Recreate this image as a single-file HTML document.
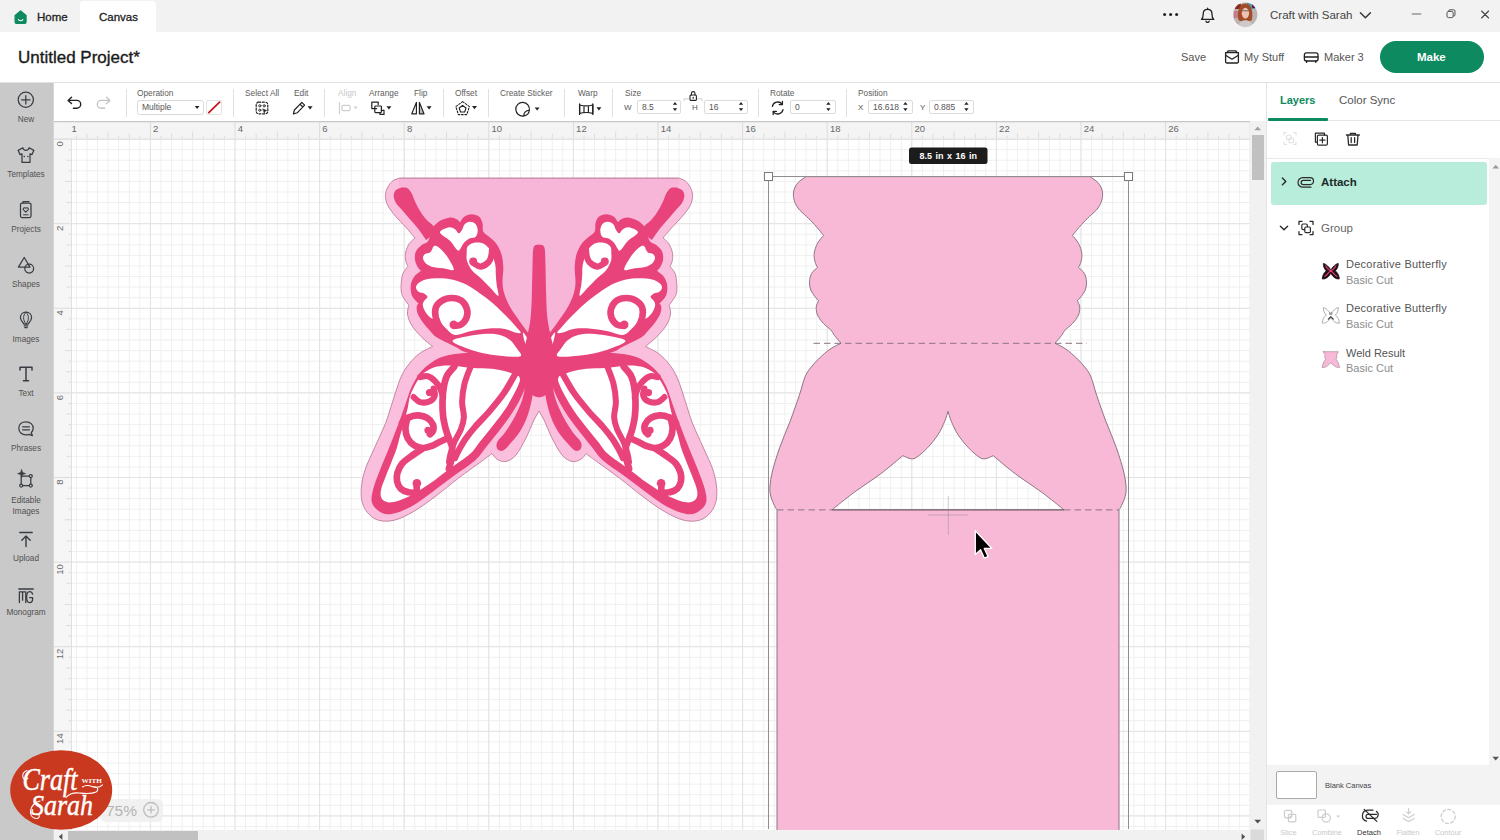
<!DOCTYPE html>
<html lang="en">
<head>
<meta charset="utf-8">
<title>Untitled Project - Canvas</title>
<style>
*{box-sizing:border-box;margin:0;padding:0}
html,body{width:1500px;height:840px;overflow:hidden;background:#fff;font-family:"Liberation Sans",sans-serif;color:#333}
.abs{position:absolute}
#topbar{position:absolute;left:0;top:0;width:1500px;height:32px;background:#f2f2f2}
#tab-canvas{position:absolute;left:80px;top:1px;width:76px;height:31px;background:#fff;border-radius:4px 4px 0 0}
.t{position:absolute;white-space:nowrap;line-height:1}
#titlebar{position:absolute;left:0;top:32px;width:1500px;height:51px;background:#fff;border-bottom:1px solid #e2e2e2}
#sidebar{position:absolute;left:0;top:83px;width:54px;height:757px;background:#c9c9c9}
.sb{position:absolute;left:0;width:52px;text-align:center;font-size:8.2px;color:#505050;line-height:11px}
#toolbar{position:absolute;left:54px;top:83px;width:1212px;height:38px;background:#fff}
.tl{position:absolute;font-size:8.3px;color:#5c5c5c;white-space:nowrap;line-height:1;top:5.5px}
.sep{position:absolute;top:6px;width:1px;height:28px;background:#e0e0e0}
.inp{position:absolute;top:17px;height:14px;border:1px solid #dcdcdc;border-radius:2px;background:#fff;font-size:8.5px;color:#555;line-height:12px;padding-left:4px}
#canvas{position:absolute;left:54px;top:121px;width:1196px;height:708.5px;overflow:hidden;background:#fff}
#vscroll{position:absolute;left:1250px;top:121px;width:16px;height:719px;background:#f1f1f1}
#hscroll{position:absolute;left:54px;top:829.5px;width:1196px;height:10.5px;background:#f1f1f1}
#panel{position:absolute;left:1266px;top:83px;width:234px;height:757px;background:#fff;border-left:1px solid #e4e4e4}
</style>
</head>
<body>
<div id="topbar">
  <div id="tab-canvas"></div>
  <span class="t" style="left:37px;top:11.700px;font-size:11.500px;color:#222;-webkit-text-stroke:.3px #222">Home</span>
  <span class="t" style="left:99px;top:11.700px;font-size:11.500px;color:#222;-webkit-text-stroke:.3px #222">Canvas</span>
  <span class="t" style="left:1270px;top:10px;font-size:11.5px;color:#444">Craft with Sarah</span>
</div>
<div id="titlebar">
  <span class="t" style="left:18px;top:17px;font-size:17px;color:#1a1a1a;-webkit-text-stroke:.35px #1a1a1a">Untitled Project*</span>
  <span class="t" style="left:1181px;top:20px;font-size:11px;color:#555">Save</span>
  <span class="t" style="left:1244px;top:20px;font-size:11px;color:#555">My Stuff</span>
  <span class="t" style="left:1324px;top:20px;font-size:11px;color:#555">Maker 3</span>
  <div class="abs" style="left:1380px;top:9px;width:104px;height:32px;border-radius:16px;background:#0d8a5f"></div>
  <span class="t" style="left:1417px;top:20px;font-size:11.500px;color:#fff;font-weight:bold">Make</span>
</div>
<svg class="abs" style="left:0;top:0" width="1500" height="83" viewBox="0 0 1500 83" fill="none" stroke="#222" stroke-width="1.200" stroke-linecap="round" stroke-linejoin="round">
<!-- home icon -->
<path d="M15.200 15.600l5.400-4.600 5.400 4.600v6.400a1.200 1.200 0 0 1-1.200 1.200h-8.400a1.200 1.200 0 0 1-1.200-1.200z" fill="#0d8a5f" stroke="#0d8a5f" stroke-width="1.400"/><path d="M18.400 19.600c.6.800 1.400 1.100 2.200 1.100s1.600-.3 2.200-1.100" stroke="#fff" stroke-width="1.100"/>
<!-- dots -->
<circle cx="1164.600" cy="14.600" r="1.500" fill="#222" stroke="none"/><circle cx="1170.600" cy="14.600" r="1.500" fill="#222" stroke="none"/><circle cx="1176.600" cy="14.600" r="1.500" fill="#222" stroke="none"/>
<!-- bell -->
<path d="M1201.400 19.400h12.400c-1.400-1.200-1.800-2.800-1.800-5.200 0-2.800-1.800-4.800-4.400-4.800s-4.400 2-4.400 4.800c0 2.400-.4 4-1.800 5.200zM1206 21.200a1.700 1.700 0 0 0 3.200 0" stroke-width="1.300"/><path d="M1207.600 8.200v1"/>
<!-- avatar -->
<defs><clipPath id="avc"><circle cx="1245.200" cy="14.600" r="12.200"/></clipPath></defs>
<g clip-path="url(#avc)" stroke="none">
<rect x="1232" y="1" width="27" height="28" fill="#bdb4b1"/>
<rect x="1247" y="1" width="8" height="8" fill="#5a93a8"/><rect x="1235" y="4" width="6" height="5" fill="#8a2a2a"/><rect x="1234" y="11" width="5" height="7" fill="#c77a8a"/><rect x="1252" y="4" width="4" height="4" fill="#5a2050"/>
<path d="M1238.500 20c-1.800-9 1.200-16.500 6.700-16.500s8.500 7.500 6.700 16.500c-1 1-2.400 1.400-3.600 1h-6.200c-1.200.4-2.600 0-3.600-1z" fill="#a24d2a"/>
<ellipse cx="1245.400" cy="13.200" rx="3.700" ry="5.400" fill="#ecc3b2"/>
<path d="M1242.200 10.800h6.400" stroke="#6a5a58" stroke-width=".9" fill="none"/>
<path d="M1238 29c.4-6 3-8.800 7.400-8.800s7 2.800 7.400 8.800z" fill="#cfc9c9"/>
</g>
<!-- chevron -->
<path d="M1360.400 12.800l5 5 5-5" stroke="#333" stroke-width="1.400"/>
<!-- window controls -->
<path d="M1412.200 14h8.600" stroke="#666" stroke-width="1"/>
<rect x="1447" y="11.400" width="6.200" height="6.200" rx="1.400" stroke="#555" stroke-width="1"/><path d="M1448.800 11.400v-.4a1.200 1.200 0 0 1 1.200-1.200h3.800a1.200 1.200 0 0 1 1.200 1.200v3.800a1.200 1.200 0 0 1-1.200 1.200h-.4" stroke="#555" stroke-width="1"/>
<path d="M1481.600 11l7 7M1488.600 11l-7 7" stroke="#444" stroke-width="1.100"/>
<!-- my stuff icon -->
<path d="M1225.600 52.600h12.800v9.200a1.200 1.200 0 0 1-1.200 1.200h-10.400a1.200 1.200 0 0 1-1.200-1.200z" stroke-width="1.300"/><path d="M1225.600 55.200l6.400 4 6.400-4" stroke-width="1.300"/><path d="M1226.800 52.600l1.600-1.800h7.200l1.600 1.800" stroke-width="1.300"/>
<!-- maker icon -->
<rect x="1304.400" y="52.800" width="13.600" height="8.200" rx="2" stroke-width="1.300"/><path d="M1304.400 57h13.600M1306.600 61v1.400M1315.800 61v1.400" stroke-width="1.300"/>
</svg>
<div id="sidebar">
<div class="abs" style="left:52.5px;top:0;width:1.5px;height:757px;background:#d6d6d6"></div>
<svg class="abs" style="left:0;top:0" width="54" height="757" viewBox="0 83 54 757" fill="none" stroke="#383d42" stroke-width="1.25" stroke-linecap="round" stroke-linejoin="round">
<!-- New -->
<circle cx="25.8" cy="99.8" r="7.6"/><path d="M25.8 95.6v8.4M21.6 99.8h8.4"/>
<!-- Templates (t-shirt) -->
<path d="M22.8 147.8c.6 1.8 2 2.6 3.2 2.6s2.6-.8 3.2-2.6l4.6 2.6-1.8 4.2-2-.8v8.600h-8v-8.600l-2 .8-1.800-4.200z"/>
<path d="M24.200 156.500h.1M27.800 156.500h.1" stroke-width="1.5"/>
<!-- Projects -->
<rect x="20.500" y="203" width="10.500" height="14.500" rx="1.500"/><path d="M23 203v-1.500h6"/><path d="M25.800 212.200l-2.300-2.300a1.400 1.400 0 0 1 2.300-1.600 1.400 1.400 0 0 1 2.300 1.600z" stroke-width="1.100"/><path d="M23.500 214.800h4.600" stroke-width="1"/>
<!-- Shapes -->
<path d="M24.200 257.500l5.800 9.600h-11.600z"/><circle cx="29.200" cy="268.600" r="4.400"/>
<!-- Images (balloon) -->
<path d="M26 312.200c3.600 0 5.600 2.600 5.600 5.400 0 3-2.400 5-3.600 6.400h-4c-1.200-1.400-3.600-3.400-3.600-6.400 0-2.800 2-5.400 5.600-5.400z"/><path d="M26 312.400c-1.800 1.600-2.400 3.400-2.400 5.400s.8 4.200 2.400 6.200c1.600-2 2.400-4.200 2.400-6.200s-.6-3.800-2.400-5.400z" stroke-width="1"/><path d="M24.200 325.800h3.600M24.800 327.600h2.400"/>
<!-- Text -->
<path d="M20 370v-2.800h12v2.800M26 367.200v13.600M23.400 380.800h5.200" stroke-width="1.500"/>
<!-- Phrases -->
<path d="M26 421.800c4.200 0 7.200 2.800 7.200 6.400 0 1.800-.8 3.400-2 4.600l1.200 2.800-3.400-1.200c-1 .4-2 .6-3 .6-4.200 0-7.200-3-7.200-6.800s3-6.400 7.200-6.400z"/><path d="M22.600 426.800h6.800M22.600 429.800h6.800"/>
<!-- Editable images -->
<rect x="21.200" y="476" width="9.600" height="9.600"/><circle cx="21.200" cy="485.600" r="1.500" fill="#c9c9c9"/><circle cx="30.800" cy="485.600" r="1.500" fill="#c9c9c9"/><circle cx="30.800" cy="476" r="1.500" fill="#c9c9c9"/><path d="M21.600 469.600l1 3 3 1-3 1-1 3-1-3-3-1 3-1z" fill="#383d42" stroke-width=".6"/>
<!-- Upload -->
<path d="M19.800 532.600h12.400" stroke-width="1.500"/><path d="M26 546.600v-10.400M21.800 540.200l4.200-4.200 4.200 4.200" stroke-width="1.400"/>
<!-- Monogram -->
<path d="M18.800 589h14.400" stroke-width="1.400"/><path d="M19.400 602.600v-10.800h6.400v10.800M22.600 591.800v8.400" stroke-width="1.300"/><path d="M32.600 594.200c-.4-1.600-1.400-2.600-3-2.600-2 0-3 1.600-3 5.400s1 5.600 3 5.600c1.800 0 3-1.200 3-3.600v-1.400h-3" stroke-width="1.300"/>
</svg>
<div class="sb" style="top:31px">New</div>
<div class="sb" style="top:86px">Templates</div>
<div class="sb" style="top:141px">Projects</div>
<div class="sb" style="top:196px">Shapes</div>
<div class="sb" style="top:251px">Images</div>
<div class="sb" style="top:305px">Text</div>
<div class="sb" style="top:360px">Phrases</div>
<div class="sb" style="top:412px">Editable<br>Images</div>
<div class="sb" style="top:470px">Upload</div>
<div class="sb" style="top:524px">Monogram</div>
</div>
<div id="toolbar">
<svg class="abs" style="left:0;top:0;z-index:2" width="1212" height="38" viewBox="54 83 1212 38" fill="none" stroke="#222" stroke-width="1.200" stroke-linecap="round" stroke-linejoin="round">
<!-- undo / redo -->
<path d="M71.500 97.200l-3.400 3.200 3.400 3.200M68.400 100.400h8.400a3.900 3.900 0 0 1 0 7.800h-3.400" stroke-width="1.400"/>
<path d="M106.500 97.200l3.400 3.200-3.400 3.200M109.600 100.400h-8.400a3.900 3.900 0 0 0 0 7.800h3.400" stroke="#c4c4c4" stroke-width="1.400"/>
<!-- operation select -->
<rect x="137.500" y="100.500" width="66" height="14" rx="2" stroke="#d9d9d9" stroke-width="1"/>
<path d="M194.800 106l2.300 3 2.300-3z" fill="#222" stroke="none"/>
<rect x="206.500" y="100.500" width="15" height="14" rx="1.500" stroke="#e2e2e2" stroke-width="1"/>
<path d="M208.800 112.600l10.800-10.400" stroke="#c9151e" stroke-width="1.800"/>
<!-- select all -->
<rect x="256.200" y="102.200" width="11.600" height="11.600" rx="2.500" stroke-dasharray="2 1.600" stroke-width="1.200"/>
<circle cx="259.800" cy="105.800" r="1.100" stroke-width=".9"/><circle cx="264.200" cy="105.800" r="1.100" stroke-width=".9"/><circle cx="259.800" cy="110.200" r="1.100" stroke-width=".9"/><path d="M263 109l3.600 1.600-1.600.6-.6 1.600z" fill="#222" stroke-width=".6"/>
<!-- edit pencil -->
<path d="M293.400 114l1-4 7.400-7.600 2.800 2.800-7.400 7.600zM300 104.200l2.800 2.800" stroke-width="1.200"/><path d="M307.6 106.2l2.5 3.2 2.5-3.2z" fill="#222" stroke="none"/>
<!-- align (disabled) -->
<path d="M339.500 102.600v11" stroke="#cfcfcf"/><rect x="342" y="105.400" width="8" height="5.200" rx="1" stroke="#cfcfcf"/><path d="M353.600 106.600l2 2.600 2-2.600z" fill="#cfcfcf" stroke="none"/>
<!-- arrange -->
<path d="M376.600 108.600h-4.800v-6.400h6.400v2.400" stroke-width="1.200"/><rect x="374.800" y="106" width="6.600" height="6.600" rx=".8" stroke-width="1.200"/><path d="M380 112.600v1.800h4v-4h-2.600" stroke-width="1.200"/><path d="M386.4 106.2l2.5 3.2 2.5-3.2z" fill="#222" stroke="none"/>
<!-- flip -->
<path d="M416.400 102.400v11.400h-4.600z" stroke-width="1.200"/><path d="M419.400 102.400v11.400h4.600z" stroke-width="1.200" fill="#bdbdbd"/><path d="M426.6 106.2l2.5 3.2 2.5-3.2z" fill="#222" stroke="none"/>
<!-- offset -->
<path d="M462.600 105.400l3.400 2.600-1.300 4h-4.200l-1.300-4z" stroke-width="1.100"/><path d="M462.600 101.600l6.800 5-2.600 8h-8.400l-2.600-8z" stroke-width="1.100" stroke-dasharray="1.800 1.600"/><path d="M472.0 106.0l2.5 3.2 2.5-3.2z" fill="#222" stroke="none"/>
<!-- create sticker -->
<path d="M529.300 110.300A6.800 6.800 0 1 0 523.700 115.900" stroke-width="1.250"/><path d="M523.700 115.900C523.900 112.800 526.200 110.500 529.300 110.300C529.100 113.400 526.800 115.600 523.700 115.900z" stroke-width="1.150"/><path d="M534.6 107.4l2.5 3.2 2.5-3.2z" fill="#222" stroke="none"/>
<!-- warp -->
<path d="M579.600 105c4.400 1.200 8.800 1.200 13.200 0v8.400c-4.400-1.200-8.800-1.200-13.200 0zM584 105.800v6.800M588.400 105.800v6.800" stroke-width="1.200"/><path d="M579.600 104v10.400M592.800 104v10.400" stroke-width="1.300"/><path d="M596.4 107.2l2.5 3.2 2.5-3.2z" fill="#222" stroke="none"/>
<!-- lock -->
<path d="M684 100.600v-1.800h5M702 100.600v-1.800h-5" stroke="#cfcfcf" stroke-width="1"/>
<rect x="690" y="95" width="6.400" height="5.400" rx="1" stroke-width="1.100"/><path d="M691.400 95v-1.600a1.800 1.800 0 0 1 3.600 0v1.600" stroke-width="1.100"/><path d="M693.200 97.200v1" stroke-width="1.100"/>
<!-- rotate icon -->
<path d="M772.400 106.400a5.400 5.400 0 0 1 9.600-2.200M783 109.600a5.400 5.400 0 0 1-9.600 2.200" stroke-width="1.300"/><path d="M782.400 101.400v3.200h-3.200M773.200 114.600v-3.200h3.200" stroke-width="1.300"/>
<path d="M672.8 104.800l2.200-2.800 2.200 2.800zM672.8 108.200l2.200 2.800 2.200-2.800z" fill="#222" stroke="none"/><path d="M738.8 104.800l2.200-2.800 2.200 2.800zM738.8 108.200l2.200 2.800 2.200-2.800z" fill="#222" stroke="none"/><path d="M826.2 104.800l2.200-2.800 2.200 2.800zM826.2 108.200l2.200 2.800 2.200-2.800z" fill="#222" stroke="none"/><path d="M903.2 104.800l2.200-2.800 2.200 2.800zM903.2 108.200l2.200 2.800 2.200-2.800z" fill="#222" stroke="none"/><path d="M964.2 104.800l2.200-2.800 2.200 2.800zM964.2 108.200l2.200 2.800 2.200-2.800z" fill="#222" stroke="none"/>
</svg>
<div class="sep" style="left:72px"></div><div class="sep" style="left:179px"></div><div class="sep" style="left:270px"></div><div class="sep" style="left:389px"></div><div class="sep" style="left:434px"></div><div class="sep" style="left:510px"></div><div class="sep" style="left:558px"></div><div class="sep" style="left:704px"></div><div class="sep" style="left:792px"></div>
<span class="tl" style="left:83px">Operation</span>
<span class="t" style="left:88px;top:20px;font-size:8.500px;color:#555">Multiple</span>
<span class="tl" style="left:191px">Select All</span>
<span class="tl" style="left:240px">Edit</span>
<span class="tl" style="left:284px;color:#c8c8c8">Align</span>
<span class="tl" style="left:315px">Arrange</span>
<span class="tl" style="left:360px">Flip</span>
<span class="tl" style="left:401px">Offset</span>
<span class="tl" style="left:446px">Create Sticker</span>
<span class="tl" style="left:524px">Warp</span>
<span class="tl" style="left:571px">Size</span>
<span class="t" style="left:570px;top:20.500px;font-size:8px;color:#555">W</span>
<div class="inp" style="left:583px;width:44px">8.5</div>
<span class="t" style="left:638px;top:20.500px;font-size:8px;color:#555">H</span>
<div class="inp" style="left:650px;width:44px">16</div>
<span class="tl" style="left:716px">Rotate</span>
<div class="inp" style="left:736px;width:46px">0</div>
<span class="tl" style="left:804px">Position</span>
<span class="t" style="left:804px;top:20.500px;font-size:8px;color:#555">X</span>
<div class="inp" style="left:814px;width:45px">16.618</div>
<span class="t" style="left:866px;top:20.500px;font-size:8px;color:#555">Y</span>
<div class="inp" style="left:875px;width:45px">0.885</div>
</div>
<div id="canvas">
<svg id="cv" width="1196" height="709" viewBox="54 121 1196 709" style="position:absolute;left:0;top:0;font-family:'Liberation Sans',sans-serif">
<defs>
<pattern id="gmin" x="65.3" y="138.6" width="10.5750" height="10.5750" patternUnits="userSpaceOnUse"><path d="M0.5 0V10.5750M0 0.5H10.5750" stroke="#efefef" stroke-width="1" fill="none"/></pattern>
<pattern id="gmaj" x="65.3" y="138.6" width="84.6000" height="84.6000" patternUnits="userSpaceOnUse"><path d="M0.5 0V84.6000M0 0.5H84.6000" stroke="#e3e3e3" stroke-width="1" fill="none"/></pattern>
</defs>
<rect x="54" y="121" width="1196" height="709" fill="#fff"/>
<rect x="54" y="121" width="1196" height="709" fill="url(#gmin)"/>
<rect x="54" y="121" width="1196" height="709" fill="url(#gmaj)"/>
<g id="card">
<path d="M948.0 176.6L806.0 176.6C804.7 177.6 800.2 180.3 798.2 182.5C796.2 184.7 794.7 187.3 794.0 190.0C793.3 192.7 793.1 195.6 793.8 198.6C794.4 201.6 795.8 204.9 797.9 207.9C800.0 210.9 803.7 213.7 806.4 216.4C809.1 219.1 811.4 221.1 814.3 224.3C817.2 227.5 822.0 233.6 823.6 235.5C822.6 236.8 819.1 240.3 817.5 243.3C815.9 246.3 814.6 250.2 814.2 253.3C813.8 256.4 814.5 259.3 815.0 261.7C815.5 264.1 817.1 266.5 817.5 267.5C816.5 268.5 813.0 270.9 811.7 273.3C810.4 275.7 809.6 278.9 809.5 281.7C809.4 284.5 809.9 287.5 810.8 290.0C811.7 292.5 813.7 294.9 815.0 296.7C816.3 298.5 818.1 300.1 818.7 300.8C818.3 301.8 816.5 304.3 816.3 306.7C816.1 309.1 816.3 312.2 817.5 315.0C818.7 317.8 821.1 320.8 823.3 323.3C825.5 325.8 828.9 328.0 830.8 330.0C832.7 332.0 832.8 333.3 834.5 335.5C836.2 337.7 839.9 341.9 841.0 343.2C839.2 344.2 833.6 346.7 830.0 349.2C826.4 351.7 822.5 355.2 819.2 358.3C816.0 361.4 812.9 364.9 810.5 368.0C808.1 371.1 806.9 372.4 805.0 377.0C803.1 381.6 801.8 388.0 799.3 395.4C796.8 402.8 793.3 412.9 790.0 421.6C786.7 430.3 782.6 439.1 779.6 447.8C776.6 456.5 773.4 466.6 771.8 474.0C770.2 481.4 769.6 487.1 770.0 492.3C770.4 497.5 773.2 502.5 774.4 505.4C775.6 508.3 776.6 509.1 777.0 509.8L777.0 832.0L948.0 832.0L1119.0 832.0L1119.0 509.8C1119.4 509.1 1120.4 508.3 1121.6 505.4C1122.8 502.5 1125.6 497.5 1126.0 492.3C1126.4 487.1 1125.8 481.4 1124.2 474.0C1122.6 466.6 1119.4 456.5 1116.4 447.8C1113.4 439.1 1109.3 430.3 1106.0 421.6C1102.7 412.9 1099.2 402.8 1096.7 395.4C1094.2 388.0 1092.9 381.6 1091.0 377.0C1089.1 372.4 1087.9 371.1 1085.5 368.0C1083.1 364.9 1080.0 361.4 1076.8 358.3C1073.5 355.2 1069.6 351.7 1066.0 349.2C1062.4 346.7 1056.8 344.2 1055.0 343.2C1056.1 341.9 1059.8 337.7 1061.5 335.5C1063.2 333.3 1063.3 332.0 1065.2 330.0C1067.1 328.0 1070.5 325.8 1072.7 323.3C1074.9 320.8 1077.3 317.8 1078.5 315.0C1079.7 312.2 1079.9 309.1 1079.7 306.7C1079.5 304.3 1077.7 301.8 1077.3 300.8C1077.9 300.1 1079.7 298.5 1081.0 296.7C1082.3 294.9 1084.3 292.5 1085.2 290.0C1086.1 287.5 1086.7 284.5 1086.5 281.7C1086.3 278.9 1085.6 275.7 1084.3 273.3C1083.0 270.9 1079.5 268.5 1078.5 267.5C1078.9 266.5 1080.5 264.1 1081.0 261.7C1081.5 259.3 1082.2 256.4 1081.8 253.3C1081.4 250.2 1080.1 246.3 1078.5 243.3C1076.9 240.3 1073.4 236.8 1072.4 235.5C1074.0 233.6 1078.8 227.5 1081.7 224.3C1084.6 221.1 1086.9 219.1 1089.6 216.4C1092.3 213.7 1096.0 210.9 1098.1 207.9C1100.2 204.9 1101.5 201.6 1102.2 198.6C1102.9 195.6 1102.7 192.7 1102.0 190.0C1101.3 187.3 1099.8 184.7 1097.8 182.5C1095.8 180.3 1091.3 177.6 1090.0 176.6L948.0 176.6ZM948.0 411.2C947.4 412.9 946.3 417.7 944.6 421.6C942.9 425.5 940.9 430.3 938.0 434.7C935.1 439.1 931.0 444.1 927.5 447.8C924.0 451.5 919.7 455.2 917.0 457.0C914.3 458.8 913.7 459.0 911.3 458.8C908.9 458.6 904.1 456.2 902.7 455.7C899.0 458.8 888.5 467.9 880.4 474.0C872.3 480.1 862.3 486.3 854.2 492.3C846.1 498.3 835.7 506.9 832.0 509.8L948.0 509.8L1064.0 509.8C1060.3 506.9 1049.9 498.3 1041.8 492.3C1033.7 486.3 1023.7 480.1 1015.6 474.0C1007.5 467.9 997.0 458.8 993.3 455.7C991.9 456.2 987.1 458.6 984.7 458.8C982.3 459.0 981.7 458.8 979.0 457.0C976.3 455.2 972.0 451.5 968.5 447.8C965.0 444.1 960.9 439.1 958.0 434.7C955.1 430.3 953.1 425.5 951.4 421.6C949.7 417.7 948.6 412.9 948.0 411.2Z" fill="#f8b9d7" fill-rule="evenodd" stroke="#8d7583" stroke-width="1"/>
<path d="M813.5 343.3H1087" stroke="#8c7482" stroke-width="1" stroke-dasharray="6.5 4" fill="none"/>
<path d="M777 509.9H832M1064 509.9H1119" stroke="#8c7482" stroke-width="1" stroke-dasharray="6.5 4" fill="none"/>
<path d="M832 509.9H1064" stroke="#77606c" stroke-width="1" fill="none"/>
</g>
<!--BF0--><g id="bfly">
<path d="M539.0 178.1L399.0 178.1C397.9 178.7 394.1 179.7 392.1 181.4C390.1 183.2 388.2 186.1 387.1 188.6C386.0 191.1 385.3 193.6 385.4 196.4C385.5 199.2 386.2 202.4 387.9 205.7C389.6 209.0 392.7 212.8 395.7 216.4C398.7 220.0 402.5 223.5 405.7 227.1C408.9 230.7 413.4 236.1 415.0 237.9C414.1 238.8 410.9 241.2 409.3 243.6C407.8 246.0 406.3 249.2 405.7 252.1C405.1 254.9 405.3 258.3 405.7 260.7C406.1 263.1 407.5 265.4 407.9 266.4C407.1 267.6 404.0 270.7 402.9 273.6C401.8 276.5 401.4 280.3 401.2 283.6C401.0 286.9 400.9 290.8 401.6 293.6C402.3 296.4 404.3 298.6 405.5 300.5C406.7 302.4 408.2 304.4 408.8 305.2C408.6 306.7 407.1 310.7 407.5 314.0C407.9 317.3 409.2 321.2 411.5 325.0C413.8 328.8 417.5 332.9 421.0 336.5C424.5 340.1 430.6 344.8 432.5 346.5C430.3 347.7 423.4 350.6 419.5 353.5C415.6 356.4 412.0 360.2 409.0 364.0C406.0 367.8 403.7 371.5 401.5 376.0C399.3 380.5 397.8 385.9 396.0 391.0C394.2 396.1 392.8 401.3 391.0 406.7C389.2 412.1 388.2 416.4 385.5 423.3C382.8 430.2 377.9 440.2 374.5 448.0C371.1 455.8 367.2 463.3 365.0 470.0C362.8 476.7 361.7 482.8 361.3 488.3C360.9 493.9 361.2 498.9 362.5 503.3C363.8 507.7 366.3 511.6 369.2 514.5C372.1 517.4 375.7 519.7 380.0 520.6C384.3 521.5 389.4 521.5 395.0 520.0C400.6 518.5 406.6 515.6 413.3 511.7C420.0 507.8 427.5 502.3 435.0 496.7C442.5 491.1 450.5 484.2 458.3 478.3C466.1 472.4 476.1 465.3 481.7 461.2C487.3 457.1 490.3 454.9 492.0 453.6C492.9 454.6 495.1 458.2 497.4 459.5C499.7 460.8 502.9 462.2 506.0 461.5C509.1 460.8 512.7 458.9 516.0 455.0C519.3 451.1 523.0 443.8 526.0 438.0C529.0 432.2 531.8 424.5 534.0 420.0C536.2 415.5 538.2 412.5 539.0 411.0C539.8 412.5 541.8 415.5 544.0 420.0C546.2 424.5 549.0 432.2 552.0 438.0C555.0 443.8 558.7 451.1 562.0 455.0C565.3 458.9 568.9 460.8 572.0 461.5C575.1 462.2 578.3 460.8 580.6 459.5C582.9 458.2 585.1 454.6 586.0 453.6C587.7 454.9 590.7 457.1 596.3 461.2C601.9 465.3 611.9 472.4 619.7 478.3C627.5 484.2 635.5 491.1 643.0 496.7C650.5 502.3 658.0 507.8 664.7 511.7C671.4 515.6 677.5 518.5 683.0 520.0C688.5 521.5 693.7 521.5 698.0 520.6C702.3 519.7 705.9 517.4 708.8 514.5C711.7 511.6 714.2 507.7 715.5 503.3C716.8 498.9 717.1 493.9 716.7 488.3C716.3 482.8 715.2 476.7 713.0 470.0C710.8 463.3 706.9 455.8 703.5 448.0C700.1 440.2 695.2 430.2 692.5 423.3C689.8 416.4 688.8 412.1 687.0 406.7C685.2 401.3 683.8 396.1 682.0 391.0C680.2 385.9 678.7 380.5 676.5 376.0C674.3 371.5 672.0 367.8 669.0 364.0C666.0 360.2 662.4 356.4 658.5 353.5C654.6 350.6 647.7 347.7 645.5 346.5C647.4 344.8 653.5 340.1 657.0 336.5C660.5 332.9 664.2 328.8 666.5 325.0C668.8 321.2 670.0 317.3 670.5 314.0C671.0 310.7 669.4 306.7 669.2 305.2C669.8 304.4 671.3 302.4 672.5 300.5C673.7 298.6 675.7 296.4 676.4 293.6C677.1 290.8 677.0 286.9 676.8 283.6C676.6 280.3 676.2 276.5 675.1 273.6C674.0 270.7 670.9 267.6 670.1 266.4C670.5 265.4 671.9 263.1 672.3 260.7C672.7 258.3 672.9 254.9 672.3 252.1C671.7 249.2 670.2 246.0 668.7 243.6C667.2 241.2 664.0 238.8 663.0 237.9C664.5 236.1 669.1 230.7 672.3 227.1C675.5 223.5 679.3 220.0 682.3 216.4C685.3 212.8 688.4 209.0 690.1 205.7C691.8 202.4 692.5 199.2 692.6 196.4C692.7 193.6 692.0 191.1 690.9 188.6C689.8 186.1 687.9 183.2 685.9 181.4C683.9 179.7 680.1 178.7 679.0 178.1L539.0 178.1Z" fill="#f9bfdd" stroke="#b5728f" stroke-width=".8"/>
<path d="M539.0 178.1L399.5 178.1C399.8 180.1 396.1 181.7 401.5 190.0C406.9 198.3 420.6 218.0 432.0 228.0C443.4 238.0 458.7 238.0 470.0 250.0C481.3 262.0 488.5 284.2 500.0 300.0C511.5 315.8 532.5 337.5 539.0 345.0C545.5 337.5 566.5 315.8 578.0 300.0C589.5 284.2 596.7 262.0 608.0 250.0C619.3 238.0 634.6 238.0 646.0 228.0C657.4 218.0 671.1 198.3 676.5 190.0C681.9 181.7 678.2 180.1 678.5 178.1L539.0 178.1Z" fill="#f7b6d8"/>
<path d="M399.500 178.300H678.500" stroke="#c58aa8" stroke-width="1" fill="none"/>
<g><path d="M433.3 226.7C434.4 225.7 437.2 222.3 440.0 220.8C442.8 219.3 447.2 217.8 450.0 217.5C452.8 217.2 455.0 218.4 456.7 219.2C458.4 220.0 459.4 221.7 460.0 222.2C460.7 221.3 462.2 218.0 464.2 216.7C466.1 215.4 469.2 214.2 471.7 214.2C474.2 214.2 477.4 215.2 479.2 216.7C481.0 218.2 481.8 220.8 482.5 223.3C483.2 225.8 482.1 229.3 483.3 231.7C484.6 234.1 487.8 235.4 490.0 237.5C492.2 239.6 494.8 241.3 496.7 244.2C498.6 247.1 500.6 251.0 501.7 255.0C502.8 259.0 503.2 263.9 503.3 268.3C503.4 272.8 502.4 277.5 502.5 281.7C502.6 285.9 502.9 289.1 504.2 293.3C505.4 297.5 507.4 302.0 510.0 306.7C512.6 311.4 516.7 317.0 520.0 321.7C523.3 326.4 526.8 331.1 530.0 335.0C533.2 338.9 537.5 343.3 539.0 345.0L539.0 362.0C532.5 361.7 512.0 361.6 500.0 360.0C487.9 358.4 473.9 354.6 466.7 352.5C459.5 350.4 460.0 349.2 456.7 347.5C453.4 345.8 450.2 344.3 446.7 342.5C443.2 340.7 438.7 338.8 435.8 336.7C432.9 334.6 431.6 332.6 429.2 330.0C426.8 327.4 423.6 323.6 421.7 320.8C419.8 318.0 418.3 315.7 417.5 313.3C416.7 310.9 416.5 308.4 416.7 306.7C416.9 305.0 418.3 303.9 418.6 303.3C418.1 302.9 417.0 302.2 415.8 300.8C414.6 299.4 412.5 297.6 411.7 295.0C410.9 292.4 410.4 288.1 410.8 285.0C411.2 281.9 412.5 279.1 414.2 276.7C415.9 274.3 419.9 271.8 421.0 270.8C420.4 270.1 418.5 268.5 417.5 266.7C416.5 264.9 415.3 262.5 415.0 260.0C414.7 257.5 414.7 254.2 415.8 251.7C416.9 249.2 419.6 246.8 421.7 245.0C423.8 243.2 426.4 243.9 428.3 240.8C430.2 237.8 432.5 229.0 433.3 226.7Z" fill="#e9437c"/><path d="M539.0 345.0C532.5 346.2 512.2 350.7 500.0 352.0C487.8 353.3 474.8 352.4 466.0 353.0C457.2 353.6 452.2 354.2 447.0 355.5C441.8 356.8 438.8 357.9 434.5 360.5C430.2 363.1 425.2 366.8 421.5 371.0C417.8 375.2 414.7 380.5 412.0 386.0C409.3 391.5 407.8 397.5 405.5 404.0C403.2 410.5 400.8 417.7 398.0 425.0C395.2 432.3 392.0 440.5 389.0 448.0C386.0 455.5 382.6 463.3 380.0 470.0C377.4 476.7 374.9 482.7 373.5 488.0C372.1 493.3 371.0 498.0 371.7 501.7C372.4 505.4 375.0 507.9 377.5 510.0C380.0 512.1 382.9 513.9 386.7 514.2C390.4 514.5 395.0 513.5 400.0 511.7C405.0 509.9 410.9 506.9 416.7 503.3C422.5 499.7 428.6 494.7 435.0 490.0C441.4 485.3 448.3 479.9 455.0 475.0C461.7 470.1 469.7 465.3 475.0 460.5C480.3 455.7 483.1 450.8 487.0 446.0C490.9 441.2 494.9 436.3 498.6 431.5C502.4 426.7 506.1 422.0 509.5 417.0C512.9 412.0 516.2 406.8 519.0 401.5C521.8 396.2 524.2 389.6 526.5 385.0C528.8 380.4 530.9 376.5 533.0 374.0C535.1 371.5 538.0 370.7 539.0 370.0Z" fill="#e9437c"/><path d="M401.4 187.4C400.5 187.8 397.3 188.7 396.0 190.0C394.7 191.3 393.6 193.3 393.6 195.5C393.6 197.7 394.7 200.7 396.0 203.0C397.3 205.3 399.1 206.6 401.4 209.3C403.7 212.0 407.1 216.0 410.0 219.3C412.9 222.6 415.9 225.9 418.6 229.3C421.3 232.8 424.8 238.2 426.0 240.0L438.0 232.0C437.2 230.9 434.9 227.6 433.0 225.5C431.1 223.4 428.6 222.2 426.3 219.6C424.0 217.0 421.2 213.0 419.3 209.8C417.4 206.6 415.9 203.3 414.6 200.5C413.3 197.7 412.8 195.1 411.5 193.0C410.2 190.9 408.7 188.9 407.0 188.0C405.3 187.1 402.3 187.5 401.4 187.4Z" fill="#e9437c"/><path d="M530.0 378.0C529.3 379.0 527.3 380.2 526.0 383.8C524.7 387.4 524.2 393.9 522.4 399.3C520.6 404.7 518.0 410.6 515.2 416.0C512.4 421.4 508.6 427.2 505.7 431.4C502.8 435.6 499.3 438.4 497.8 441.0C496.3 443.6 496.3 445.3 496.6 446.9C496.9 448.5 498.3 450.1 499.5 450.6C500.7 451.1 502.2 451.2 504.0 450.0C505.8 448.8 507.8 446.4 510.5 443.3C513.2 440.2 517.2 435.8 520.0 431.4C522.8 427.0 525.1 422.5 527.1 417.1C529.1 411.8 530.8 404.8 531.9 399.3C533.0 393.8 533.6 387.6 534.0 384.0C534.4 380.4 534.0 379.0 534.0 378.0Z" fill="#e9437c"/><path d="M435.8 245.8C437.2 246.4 439.6 247.9 441.7 250.0C443.8 252.1 446.3 255.1 448.3 258.3C450.3 261.6 454.5 268.0 453.7 269.7C452.8 271.3 447.0 268.8 443.3 268.3C439.7 267.8 434.7 267.6 431.7 266.7C428.6 265.7 426.4 264.0 425.0 262.5C423.6 261.0 422.9 258.9 423.0 257.5C423.1 256.1 424.2 254.6 425.3 253.8C426.4 253.0 428.6 253.4 429.7 252.7C430.8 252.0 431.4 250.7 432.0 249.7C432.6 248.7 432.7 247.3 433.3 246.7C434.0 246.0 434.4 245.3 435.8 245.8ZM440.0 232.5C439.7 230.3 445.8 228.1 448.3 227.5C450.8 226.9 453.3 228.2 455.0 229.2C456.7 230.1 457.5 233.2 458.7 233.3C459.8 233.5 461.0 231.5 462.0 230.0C463.0 228.5 463.3 225.6 464.7 224.2C466.0 222.8 468.2 221.8 470.0 221.7C471.8 221.6 474.1 222.3 475.3 223.7C476.6 225.1 477.6 227.8 477.7 230.0C477.8 232.2 477.1 235.3 475.8 236.7C474.6 238.1 471.9 237.4 470.0 238.3C468.1 239.3 465.8 240.8 464.2 242.5C462.6 244.2 461.4 247.4 460.3 248.7C459.2 250.0 459.2 251.6 457.5 250.3C455.8 249.0 452.9 243.8 450.0 240.8C447.1 237.9 440.3 234.7 440.0 232.5ZM467.5 246.7C468.6 244.9 471.0 243.6 473.3 243.0C475.7 242.4 479.3 242.4 481.7 243.0C484.0 243.6 485.8 244.9 487.5 246.7C489.2 248.4 490.4 250.3 491.7 253.3C493.0 256.4 494.6 261.4 495.3 265.0C496.0 268.6 495.6 271.7 495.8 275.0C496.1 278.3 496.2 281.5 496.7 285.0C497.1 288.5 499.4 295.4 498.3 295.8C497.2 296.2 493.1 290.6 490.0 287.5C486.9 284.4 483.1 280.4 480.0 277.5C476.9 274.6 473.8 272.8 471.7 270.0C469.5 267.2 467.8 263.6 467.0 260.8C466.2 258.1 466.6 255.7 466.7 253.3C466.8 251.0 466.4 248.4 467.5 246.7ZM418.3 283.3C420.1 281.9 422.8 280.0 426.7 279.2C430.6 278.3 436.7 278.1 441.7 278.3C446.7 278.6 451.9 279.4 456.7 280.8C461.4 282.2 465.6 284.2 470.0 286.7C474.4 289.2 478.9 292.5 483.3 295.8C487.8 299.2 492.5 302.9 496.7 306.7C500.8 310.4 505.0 314.9 508.3 318.3C511.7 321.8 514.6 325.1 516.7 327.5C518.8 329.9 521.1 332.0 520.8 332.8C520.6 333.7 517.9 333.2 515.0 332.5C512.1 331.8 508.1 329.3 503.3 328.7C498.6 328.0 492.2 328.2 486.7 328.7C481.1 329.1 475.3 330.3 470.0 331.3C464.7 332.4 459.2 335.6 455.0 335.0C450.8 334.4 447.8 329.9 445.0 327.5C442.2 325.1 440.7 322.4 438.3 320.8C436.0 319.2 433.1 319.5 431.0 318.0C428.9 316.5 426.9 314.2 425.5 312.0C424.1 309.8 423.0 306.9 422.8 305.0C422.6 303.1 423.7 301.8 424.5 300.5C425.3 299.2 427.6 298.2 427.5 297.0C427.4 295.8 425.4 294.3 424.0 293.5C422.6 292.7 420.3 292.9 419.0 292.0C417.7 291.1 416.1 289.4 416.0 288.0C415.9 286.6 416.6 284.8 418.3 283.3ZM452.5 340.8C453.1 338.8 464.3 337.0 470.0 335.8C475.7 334.6 481.7 333.8 486.7 333.7C491.7 333.5 496.1 333.9 500.0 335.0C503.9 336.1 507.2 337.8 510.0 340.0C512.8 342.2 514.9 345.6 516.7 348.3C518.4 351.1 523.1 355.1 520.3 356.3C517.6 357.6 506.2 356.3 500.0 355.8C493.8 355.3 488.9 354.6 483.3 353.3C477.8 352.1 471.8 350.4 466.7 348.3C461.5 346.2 451.9 342.9 452.5 340.8ZM523.0 332.5C523.6 332.2 527.2 337.5 528.0 340.0C528.8 342.5 528.1 347.2 527.5 347.5C526.9 347.8 525.4 344.2 524.7 341.7C523.9 339.2 522.4 332.8 523.0 332.5ZM516.4 375.8C514.7 375.1 512.9 373.5 508.8 372.3C504.7 371.1 497.7 369.5 491.7 368.8C485.7 368.1 479.3 368.6 472.6 368.0C465.9 367.4 457.3 365.8 451.4 365.5C445.5 365.2 441.1 365.7 437.1 366.5C433.1 367.3 430.4 368.8 427.6 370.5C424.8 372.2 422.8 373.8 420.5 376.5C418.2 379.2 415.8 383.6 414.0 387.0C412.2 390.4 410.8 393.8 409.8 397.1C408.8 400.4 408.7 403.5 408.0 406.7C407.3 409.9 406.4 413.1 405.6 416.2C404.8 419.2 404.3 421.7 403.4 425.0C402.5 428.3 401.1 432.0 400.0 436.0C398.9 440.0 397.9 444.7 396.5 449.0C395.1 453.3 393.3 457.3 391.5 462.0C389.7 466.7 387.3 472.2 385.5 477.0C383.7 481.8 381.3 487.2 380.8 491.0C380.3 494.8 380.7 497.6 382.5 499.5C384.3 501.4 387.4 502.8 391.7 502.3C396.0 501.8 401.9 499.8 408.3 496.7C414.7 493.6 423.1 488.3 430.0 483.6C436.9 478.9 443.2 473.6 450.0 468.6C456.8 463.6 465.6 457.9 470.5 453.5C475.4 449.1 476.1 446.6 479.5 442.3C482.9 438.1 487.1 432.9 491.0 428.0C494.9 423.1 499.3 417.8 502.9 412.6C506.5 407.5 509.6 402.2 512.4 397.1C515.2 392.0 518.4 385.4 519.5 382.0C520.6 378.6 519.5 377.5 519.0 376.5C518.5 375.5 518.1 376.5 516.4 375.8Z" fill="#fff"/><path d="M492.0 250.0C491.9 251.0 491.9 254.0 491.3 256.0C490.8 258.0 490.5 260.2 488.7 262.0C486.9 263.8 483.1 266.4 480.7 266.6C478.2 266.9 475.1 264.0 474.0 263.5" fill="none" stroke="#e9437c" stroke-width="6.2" stroke-linecap="round" stroke-linejoin="round"/><circle cx="473.2" cy="261.6" r="4" fill="#e9437c"/><path d="M450.0 338.0C448.5 336.4 443.2 331.8 440.8 328.3C438.5 324.9 436.7 321.0 435.8 317.5C435.0 314.0 434.9 310.3 435.8 307.5C436.8 304.7 439.0 302.4 441.7 300.8C444.3 299.2 448.3 298.0 451.7 298.0C455.0 298.0 459.1 299.0 461.7 300.8C464.2 302.7 466.2 306.2 467.0 309.2C467.8 312.1 467.4 315.8 466.3 318.3C465.3 320.9 462.8 323.4 460.8 324.7C458.9 325.9 455.7 325.6 454.7 325.8" fill="none" stroke="#e9437c" stroke-width="6.6" stroke-linecap="round" stroke-linejoin="round"/><circle cx="453.7" cy="324.7" r="4.2" fill="#e9437c"/><path d="M454.3 366.7C453.1 368.2 448.9 372.1 447.1 375.6C445.3 379.1 444.4 383.2 443.7 387.6C442.9 392.0 442.6 397.1 442.5 401.9C442.4 406.7 442.6 411.7 443.1 416.2C443.6 420.6 444.7 425.0 445.6 428.6C446.5 432.1 447.5 434.4 448.6 437.5C449.7 440.6 451.6 443.9 452.1 447.1C452.7 450.4 452.7 453.6 452.1 457.1C451.6 460.7 449.4 466.7 448.9 468.6" fill="none" stroke="#e9437c" stroke-width="6.7" stroke-linecap="round" stroke-linejoin="round"/><path d="M443.1 397.1C442.6 395.7 441.6 391.3 440.2 388.6C438.9 385.9 437.0 383.0 434.9 381.0C432.8 378.9 430.3 376.8 427.9 376.2C425.4 375.6 421.5 377.0 420.2 377.1" fill="none" stroke="#e9437c" stroke-width="6.1000000000000005" stroke-linecap="round" stroke-linejoin="round"/><path d="M473.0 363.5C472.6 364.1 471.9 363.7 470.5 367.1C469.1 370.5 465.9 378.0 464.5 383.8C463.1 389.6 462.2 396.1 462.1 401.7C462.0 407.2 464.1 412.6 463.9 417.1C463.7 421.7 462.7 424.6 461.0 429.0C459.3 433.4 455.6 438.9 453.8 443.3C452.0 447.7 451.0 452.1 450.2 455.2C449.4 458.3 449.2 460.9 449.0 462.0" fill="none" stroke="#e9437c" stroke-width="6" stroke-linecap="round" stroke-linejoin="round"/><path d="M517.0 371.5C516.6 372.1 517.0 371.3 514.8 374.9C512.6 378.5 508.0 387.2 503.8 393.3C499.6 399.4 494.3 405.6 489.5 411.2C484.7 416.8 479.2 422.1 475.2 426.7C471.2 431.3 468.5 434.6 465.7 438.6C462.9 442.6 460.4 447.3 458.6 450.5C456.8 453.7 455.6 456.8 455.0 458.0" fill="none" stroke="#e9437c" stroke-width="6.3" stroke-linecap="round" stroke-linejoin="round"/><path d="M413.6 397.1C414.7 398.0 417.5 401.4 420.2 402.1C422.9 402.8 427.3 402.5 429.8 401.3C432.2 400.2 434.3 397.4 434.9 395.2C435.5 393.1 433.8 389.7 433.6 388.6" fill="none" stroke="#e9437c" stroke-width="6.1000000000000005" stroke-linecap="round" stroke-linejoin="round"/><circle cx="429.6" cy="392.6" r="3.7" fill="#e9437c"/><path d="M402.1 422.9C403.5 421.9 407.3 418.1 410.0 416.9C412.7 415.6 415.7 415.3 418.6 415.4C421.4 415.6 424.8 416.4 427.1 417.9C429.5 419.3 431.9 422.1 432.9 424.3C433.9 426.4 433.6 429.0 433.1 430.7C432.7 432.4 430.5 433.7 430.0 434.3" fill="none" stroke="#e9437c" stroke-width="6.7" stroke-linecap="round" stroke-linejoin="round"/><circle cx="427.9" cy="430.3" r="3.5" fill="#e9437c"/><path d="M407.4 417.9C407.1 419.6 405.4 425.1 405.4 428.6C405.5 432.0 406.4 435.8 407.9 438.6C409.3 441.4 411.8 443.9 414.3 445.4C416.8 447.0 420.0 447.9 422.9 448.0C425.7 448.1 428.6 447.0 431.4 446.0C434.3 445.0 437.1 443.0 440.0 441.7C442.9 440.4 447.1 438.6 448.6 438.0" fill="none" stroke="#e9437c" stroke-width="6.7" stroke-linecap="round" stroke-linejoin="round"/><path d="M422.1 448.9C420.1 450.2 413.3 454.7 410.0 457.1C406.7 459.6 404.2 461.0 402.1 463.6C400.0 466.2 398.3 469.9 397.4 472.9C396.6 475.8 396.6 478.8 397.1 481.4C397.7 484.0 398.9 486.8 400.7 488.6C402.5 490.4 405.3 491.6 407.9 492.1C410.4 492.7 414.5 492.8 416.0 491.7C417.5 490.6 416.5 486.7 416.6 485.7" fill="none" stroke="#e9437c" stroke-width="6.7" stroke-linecap="round" stroke-linejoin="round"/><circle cx="416.9" cy="483.3" r="4.3" fill="#e9437c"/></g>
<g transform="translate(1078 0) scale(-1 1)"><path d="M433.3 226.7C434.4 225.7 437.2 222.3 440.0 220.8C442.8 219.3 447.2 217.8 450.0 217.5C452.8 217.2 455.0 218.4 456.7 219.2C458.4 220.0 459.4 221.7 460.0 222.2C460.7 221.3 462.2 218.0 464.2 216.7C466.1 215.4 469.2 214.2 471.7 214.2C474.2 214.2 477.4 215.2 479.2 216.7C481.0 218.2 481.8 220.8 482.5 223.3C483.2 225.8 482.1 229.3 483.3 231.7C484.6 234.1 487.8 235.4 490.0 237.5C492.2 239.6 494.8 241.3 496.7 244.2C498.6 247.1 500.6 251.0 501.7 255.0C502.8 259.0 503.2 263.9 503.3 268.3C503.4 272.8 502.4 277.5 502.5 281.7C502.6 285.9 502.9 289.1 504.2 293.3C505.4 297.5 507.4 302.0 510.0 306.7C512.6 311.4 516.7 317.0 520.0 321.7C523.3 326.4 526.8 331.1 530.0 335.0C533.2 338.9 537.5 343.3 539.0 345.0L539.0 362.0C532.5 361.7 512.0 361.6 500.0 360.0C487.9 358.4 473.9 354.6 466.7 352.5C459.5 350.4 460.0 349.2 456.7 347.5C453.4 345.8 450.2 344.3 446.7 342.5C443.2 340.7 438.7 338.8 435.8 336.7C432.9 334.6 431.6 332.6 429.2 330.0C426.8 327.4 423.6 323.6 421.7 320.8C419.8 318.0 418.3 315.7 417.5 313.3C416.7 310.9 416.5 308.4 416.7 306.7C416.9 305.0 418.3 303.9 418.6 303.3C418.1 302.9 417.0 302.2 415.8 300.8C414.6 299.4 412.5 297.6 411.7 295.0C410.9 292.4 410.4 288.1 410.8 285.0C411.2 281.9 412.5 279.1 414.2 276.7C415.9 274.3 419.9 271.8 421.0 270.8C420.4 270.1 418.5 268.5 417.5 266.7C416.5 264.9 415.3 262.5 415.0 260.0C414.7 257.5 414.7 254.2 415.8 251.7C416.9 249.2 419.6 246.8 421.7 245.0C423.8 243.2 426.4 243.9 428.3 240.8C430.2 237.8 432.5 229.0 433.3 226.7Z" fill="#e9437c"/><path d="M539.0 345.0C532.5 346.2 512.2 350.7 500.0 352.0C487.8 353.3 474.8 352.4 466.0 353.0C457.2 353.6 452.2 354.2 447.0 355.5C441.8 356.8 438.8 357.9 434.5 360.5C430.2 363.1 425.2 366.8 421.5 371.0C417.8 375.2 414.7 380.5 412.0 386.0C409.3 391.5 407.8 397.5 405.5 404.0C403.2 410.5 400.8 417.7 398.0 425.0C395.2 432.3 392.0 440.5 389.0 448.0C386.0 455.5 382.6 463.3 380.0 470.0C377.4 476.7 374.9 482.7 373.5 488.0C372.1 493.3 371.0 498.0 371.7 501.7C372.4 505.4 375.0 507.9 377.5 510.0C380.0 512.1 382.9 513.9 386.7 514.2C390.4 514.5 395.0 513.5 400.0 511.7C405.0 509.9 410.9 506.9 416.7 503.3C422.5 499.7 428.6 494.7 435.0 490.0C441.4 485.3 448.3 479.9 455.0 475.0C461.7 470.1 469.7 465.3 475.0 460.5C480.3 455.7 483.1 450.8 487.0 446.0C490.9 441.2 494.9 436.3 498.6 431.5C502.4 426.7 506.1 422.0 509.5 417.0C512.9 412.0 516.2 406.8 519.0 401.5C521.8 396.2 524.2 389.6 526.5 385.0C528.8 380.4 530.9 376.5 533.0 374.0C535.1 371.5 538.0 370.7 539.0 370.0Z" fill="#e9437c"/><path d="M401.4 187.4C400.5 187.8 397.3 188.7 396.0 190.0C394.7 191.3 393.6 193.3 393.6 195.5C393.6 197.7 394.7 200.7 396.0 203.0C397.3 205.3 399.1 206.6 401.4 209.3C403.7 212.0 407.1 216.0 410.0 219.3C412.9 222.6 415.9 225.9 418.6 229.3C421.3 232.8 424.8 238.2 426.0 240.0L438.0 232.0C437.2 230.9 434.9 227.6 433.0 225.5C431.1 223.4 428.6 222.2 426.3 219.6C424.0 217.0 421.2 213.0 419.3 209.8C417.4 206.6 415.9 203.3 414.6 200.5C413.3 197.7 412.8 195.1 411.5 193.0C410.2 190.9 408.7 188.9 407.0 188.0C405.3 187.1 402.3 187.5 401.4 187.4Z" fill="#e9437c"/><path d="M530.0 378.0C529.3 379.0 527.3 380.2 526.0 383.8C524.7 387.4 524.2 393.9 522.4 399.3C520.6 404.7 518.0 410.6 515.2 416.0C512.4 421.4 508.6 427.2 505.7 431.4C502.8 435.6 499.3 438.4 497.8 441.0C496.3 443.6 496.3 445.3 496.6 446.9C496.9 448.5 498.3 450.1 499.5 450.6C500.7 451.1 502.2 451.2 504.0 450.0C505.8 448.8 507.8 446.4 510.5 443.3C513.2 440.2 517.2 435.8 520.0 431.4C522.8 427.0 525.1 422.5 527.1 417.1C529.1 411.8 530.8 404.8 531.9 399.3C533.0 393.8 533.6 387.6 534.0 384.0C534.4 380.4 534.0 379.0 534.0 378.0Z" fill="#e9437c"/><path d="M435.8 245.8C437.2 246.4 439.6 247.9 441.7 250.0C443.8 252.1 446.3 255.1 448.3 258.3C450.3 261.6 454.5 268.0 453.7 269.7C452.8 271.3 447.0 268.8 443.3 268.3C439.7 267.8 434.7 267.6 431.7 266.7C428.6 265.7 426.4 264.0 425.0 262.5C423.6 261.0 422.9 258.9 423.0 257.5C423.1 256.1 424.2 254.6 425.3 253.8C426.4 253.0 428.6 253.4 429.7 252.7C430.8 252.0 431.4 250.7 432.0 249.7C432.6 248.7 432.7 247.3 433.3 246.7C434.0 246.0 434.4 245.3 435.8 245.8ZM440.0 232.5C439.7 230.3 445.8 228.1 448.3 227.5C450.8 226.9 453.3 228.2 455.0 229.2C456.7 230.1 457.5 233.2 458.7 233.3C459.8 233.5 461.0 231.5 462.0 230.0C463.0 228.5 463.3 225.6 464.7 224.2C466.0 222.8 468.2 221.8 470.0 221.7C471.8 221.6 474.1 222.3 475.3 223.7C476.6 225.1 477.6 227.8 477.7 230.0C477.8 232.2 477.1 235.3 475.8 236.7C474.6 238.1 471.9 237.4 470.0 238.3C468.1 239.3 465.8 240.8 464.2 242.5C462.6 244.2 461.4 247.4 460.3 248.7C459.2 250.0 459.2 251.6 457.5 250.3C455.8 249.0 452.9 243.8 450.0 240.8C447.1 237.9 440.3 234.7 440.0 232.5ZM467.5 246.7C468.6 244.9 471.0 243.6 473.3 243.0C475.7 242.4 479.3 242.4 481.7 243.0C484.0 243.6 485.8 244.9 487.5 246.7C489.2 248.4 490.4 250.3 491.7 253.3C493.0 256.4 494.6 261.4 495.3 265.0C496.0 268.6 495.6 271.7 495.8 275.0C496.1 278.3 496.2 281.5 496.7 285.0C497.1 288.5 499.4 295.4 498.3 295.8C497.2 296.2 493.1 290.6 490.0 287.5C486.9 284.4 483.1 280.4 480.0 277.5C476.9 274.6 473.8 272.8 471.7 270.0C469.5 267.2 467.8 263.6 467.0 260.8C466.2 258.1 466.6 255.7 466.7 253.3C466.8 251.0 466.4 248.4 467.5 246.7ZM418.3 283.3C420.1 281.9 422.8 280.0 426.7 279.2C430.6 278.3 436.7 278.1 441.7 278.3C446.7 278.6 451.9 279.4 456.7 280.8C461.4 282.2 465.6 284.2 470.0 286.7C474.4 289.2 478.9 292.5 483.3 295.8C487.8 299.2 492.5 302.9 496.7 306.7C500.8 310.4 505.0 314.9 508.3 318.3C511.7 321.8 514.6 325.1 516.7 327.5C518.8 329.9 521.1 332.0 520.8 332.8C520.6 333.7 517.9 333.2 515.0 332.5C512.1 331.8 508.1 329.3 503.3 328.7C498.6 328.0 492.2 328.2 486.7 328.7C481.1 329.1 475.3 330.3 470.0 331.3C464.7 332.4 459.2 335.6 455.0 335.0C450.8 334.4 447.8 329.9 445.0 327.5C442.2 325.1 440.7 322.4 438.3 320.8C436.0 319.2 433.1 319.5 431.0 318.0C428.9 316.5 426.9 314.2 425.5 312.0C424.1 309.8 423.0 306.9 422.8 305.0C422.6 303.1 423.7 301.8 424.5 300.5C425.3 299.2 427.6 298.2 427.5 297.0C427.4 295.8 425.4 294.3 424.0 293.5C422.6 292.7 420.3 292.9 419.0 292.0C417.7 291.1 416.1 289.4 416.0 288.0C415.9 286.6 416.6 284.8 418.3 283.3ZM452.5 340.8C453.1 338.8 464.3 337.0 470.0 335.8C475.7 334.6 481.7 333.8 486.7 333.7C491.7 333.5 496.1 333.9 500.0 335.0C503.9 336.1 507.2 337.8 510.0 340.0C512.8 342.2 514.9 345.6 516.7 348.3C518.4 351.1 523.1 355.1 520.3 356.3C517.6 357.6 506.2 356.3 500.0 355.8C493.8 355.3 488.9 354.6 483.3 353.3C477.8 352.1 471.8 350.4 466.7 348.3C461.5 346.2 451.9 342.9 452.5 340.8ZM523.0 332.5C523.6 332.2 527.2 337.5 528.0 340.0C528.8 342.5 528.1 347.2 527.5 347.5C526.9 347.8 525.4 344.2 524.7 341.7C523.9 339.2 522.4 332.8 523.0 332.5ZM516.4 375.8C514.7 375.1 512.9 373.5 508.8 372.3C504.7 371.1 497.7 369.5 491.7 368.8C485.7 368.1 479.3 368.6 472.6 368.0C465.9 367.4 457.3 365.8 451.4 365.5C445.5 365.2 441.1 365.7 437.1 366.5C433.1 367.3 430.4 368.8 427.6 370.5C424.8 372.2 422.8 373.8 420.5 376.5C418.2 379.2 415.8 383.6 414.0 387.0C412.2 390.4 410.8 393.8 409.8 397.1C408.8 400.4 408.7 403.5 408.0 406.7C407.3 409.9 406.4 413.1 405.6 416.2C404.8 419.2 404.3 421.7 403.4 425.0C402.5 428.3 401.1 432.0 400.0 436.0C398.9 440.0 397.9 444.7 396.5 449.0C395.1 453.3 393.3 457.3 391.5 462.0C389.7 466.7 387.3 472.2 385.5 477.0C383.7 481.8 381.3 487.2 380.8 491.0C380.3 494.8 380.7 497.6 382.5 499.5C384.3 501.4 387.4 502.8 391.7 502.3C396.0 501.8 401.9 499.8 408.3 496.7C414.7 493.6 423.1 488.3 430.0 483.6C436.9 478.9 443.2 473.6 450.0 468.6C456.8 463.6 465.6 457.9 470.5 453.5C475.4 449.1 476.1 446.6 479.5 442.3C482.9 438.1 487.1 432.9 491.0 428.0C494.9 423.1 499.3 417.8 502.9 412.6C506.5 407.5 509.6 402.2 512.4 397.1C515.2 392.0 518.4 385.4 519.5 382.0C520.6 378.6 519.5 377.5 519.0 376.5C518.5 375.5 518.1 376.5 516.4 375.8Z" fill="#fff"/><path d="M492.0 250.0C491.9 251.0 491.9 254.0 491.3 256.0C490.8 258.0 490.5 260.2 488.7 262.0C486.9 263.8 483.1 266.4 480.7 266.6C478.2 266.9 475.1 264.0 474.0 263.5" fill="none" stroke="#e9437c" stroke-width="6.2" stroke-linecap="round" stroke-linejoin="round"/><circle cx="473.2" cy="261.6" r="4" fill="#e9437c"/><path d="M450.0 338.0C448.5 336.4 443.2 331.8 440.8 328.3C438.5 324.9 436.7 321.0 435.8 317.5C435.0 314.0 434.9 310.3 435.8 307.5C436.8 304.7 439.0 302.4 441.7 300.8C444.3 299.2 448.3 298.0 451.7 298.0C455.0 298.0 459.1 299.0 461.7 300.8C464.2 302.7 466.2 306.2 467.0 309.2C467.8 312.1 467.4 315.8 466.3 318.3C465.3 320.9 462.8 323.4 460.8 324.7C458.9 325.9 455.7 325.6 454.7 325.8" fill="none" stroke="#e9437c" stroke-width="6.6" stroke-linecap="round" stroke-linejoin="round"/><circle cx="453.7" cy="324.7" r="4.2" fill="#e9437c"/><path d="M454.3 366.7C453.1 368.2 448.9 372.1 447.1 375.6C445.3 379.1 444.4 383.2 443.7 387.6C442.9 392.0 442.6 397.1 442.5 401.9C442.4 406.7 442.6 411.7 443.1 416.2C443.6 420.6 444.7 425.0 445.6 428.6C446.5 432.1 447.5 434.4 448.6 437.5C449.7 440.6 451.6 443.9 452.1 447.1C452.7 450.4 452.7 453.6 452.1 457.1C451.6 460.7 449.4 466.7 448.9 468.6" fill="none" stroke="#e9437c" stroke-width="6.7" stroke-linecap="round" stroke-linejoin="round"/><path d="M443.1 397.1C442.6 395.7 441.6 391.3 440.2 388.6C438.9 385.9 437.0 383.0 434.9 381.0C432.8 378.9 430.3 376.8 427.9 376.2C425.4 375.6 421.5 377.0 420.2 377.1" fill="none" stroke="#e9437c" stroke-width="6.1000000000000005" stroke-linecap="round" stroke-linejoin="round"/><path d="M473.0 363.5C472.6 364.1 471.9 363.7 470.5 367.1C469.1 370.5 465.9 378.0 464.5 383.8C463.1 389.6 462.2 396.1 462.1 401.7C462.0 407.2 464.1 412.6 463.9 417.1C463.7 421.7 462.7 424.6 461.0 429.0C459.3 433.4 455.6 438.9 453.8 443.3C452.0 447.7 451.0 452.1 450.2 455.2C449.4 458.3 449.2 460.9 449.0 462.0" fill="none" stroke="#e9437c" stroke-width="6" stroke-linecap="round" stroke-linejoin="round"/><path d="M517.0 371.5C516.6 372.1 517.0 371.3 514.8 374.9C512.6 378.5 508.0 387.2 503.8 393.3C499.6 399.4 494.3 405.6 489.5 411.2C484.7 416.8 479.2 422.1 475.2 426.7C471.2 431.3 468.5 434.6 465.7 438.6C462.9 442.6 460.4 447.3 458.6 450.5C456.8 453.7 455.6 456.8 455.0 458.0" fill="none" stroke="#e9437c" stroke-width="6.3" stroke-linecap="round" stroke-linejoin="round"/><path d="M413.6 397.1C414.7 398.0 417.5 401.4 420.2 402.1C422.9 402.8 427.3 402.5 429.8 401.3C432.2 400.2 434.3 397.4 434.9 395.2C435.5 393.1 433.8 389.7 433.6 388.6" fill="none" stroke="#e9437c" stroke-width="6.1000000000000005" stroke-linecap="round" stroke-linejoin="round"/><circle cx="429.6" cy="392.6" r="3.7" fill="#e9437c"/><path d="M402.1 422.9C403.5 421.9 407.3 418.1 410.0 416.9C412.7 415.6 415.7 415.3 418.6 415.4C421.4 415.6 424.8 416.4 427.1 417.9C429.5 419.3 431.9 422.1 432.9 424.3C433.9 426.4 433.6 429.0 433.1 430.7C432.7 432.4 430.5 433.7 430.0 434.3" fill="none" stroke="#e9437c" stroke-width="6.7" stroke-linecap="round" stroke-linejoin="round"/><circle cx="427.9" cy="430.3" r="3.5" fill="#e9437c"/><path d="M407.4 417.9C407.1 419.6 405.4 425.1 405.4 428.6C405.5 432.0 406.4 435.8 407.9 438.6C409.3 441.4 411.8 443.9 414.3 445.4C416.8 447.0 420.0 447.9 422.9 448.0C425.7 448.1 428.6 447.0 431.4 446.0C434.3 445.0 437.1 443.0 440.0 441.7C442.9 440.4 447.1 438.6 448.6 438.0" fill="none" stroke="#e9437c" stroke-width="6.7" stroke-linecap="round" stroke-linejoin="round"/><path d="M422.1 448.9C420.1 450.2 413.3 454.7 410.0 457.1C406.7 459.6 404.2 461.0 402.1 463.6C400.0 466.2 398.3 469.9 397.4 472.9C396.6 475.8 396.6 478.8 397.1 481.4C397.7 484.0 398.9 486.8 400.7 488.6C402.5 490.4 405.3 491.6 407.9 492.1C410.4 492.7 414.5 492.8 416.0 491.7C417.5 490.6 416.5 486.7 416.6 485.7" fill="none" stroke="#e9437c" stroke-width="6.7" stroke-linecap="round" stroke-linejoin="round"/><circle cx="416.9" cy="483.3" r="4.3" fill="#e9437c"/></g>
<path d="M539.0 244.6C538.3 244.8 536.0 244.8 535.0 245.6C534.0 246.4 533.6 246.8 533.2 249.5C532.8 252.2 532.8 254.2 532.6 262.0C532.4 269.8 532.1 286.7 531.8 296.0C531.5 305.3 531.3 311.5 530.6 318.0C529.9 324.5 528.6 329.7 527.5 335.0C526.4 340.3 524.8 345.0 524.0 350.0C523.2 355.0 522.4 359.8 522.5 365.0C522.6 370.2 523.4 376.6 524.5 381.0C525.6 385.4 527.3 388.9 529.0 391.5C530.7 394.1 532.8 395.3 534.5 396.3C536.2 397.3 538.2 397.2 539.0 397.4C539.8 397.2 541.8 397.3 543.5 396.3C545.2 395.3 547.3 394.1 549.0 391.5C550.7 388.9 552.4 385.4 553.5 381.0C554.6 376.6 555.4 370.2 555.5 365.0C555.6 359.8 554.8 355.0 554.0 350.0C553.2 345.0 551.6 340.3 550.5 335.0C549.4 329.7 548.1 324.5 547.4 318.0C546.7 311.5 546.5 305.3 546.2 296.0C545.9 286.7 545.6 269.8 545.4 262.0C545.2 254.2 545.2 252.2 544.8 249.5C544.4 246.8 544.0 246.4 543.0 245.6C542.0 244.8 539.7 244.8 539.0 244.6Z" fill="#e9437c"/>
</g><!--BF1-->
<g id="rulers">
<rect x="54" y="121" width="1196" height="17.6" fill="#f4f4f4"/>
<rect x="54" y="138.6" width="17.5" height="700" fill="#f6f6f6"/>
<path d="M76.38 138.6v-3.0M86.95 138.6v-5.0M97.52 138.6v-3.0M108.10 138.6v-7.0M118.67 138.6v-3.0M129.25 138.6v-5.0M139.82 138.6v-3.0M150.40 138.6v-17.6M160.97 138.6v-3.0M171.55 138.6v-5.0M182.12 138.6v-3.0M192.70 138.6v-7.0M203.27 138.6v-3.0M213.85 138.6v-5.0M224.43 138.6v-3.0M235.00 138.6v-17.6M245.57 138.6v-3.0M256.15 138.6v-5.0M266.72 138.6v-3.0M277.30 138.6v-7.0M287.88 138.6v-3.0M298.45 138.6v-5.0M309.02 138.6v-3.0M319.60 138.6v-17.6M330.18 138.6v-3.0M340.75 138.6v-5.0M351.32 138.6v-3.0M361.90 138.6v-7.0M372.47 138.6v-3.0M383.05 138.6v-5.0M393.62 138.6v-3.0M404.20 138.6v-17.6M414.77 138.6v-3.0M425.35 138.6v-5.0M435.93 138.6v-3.0M446.50 138.6v-7.0M457.07 138.6v-3.0M467.65 138.6v-5.0M478.22 138.6v-3.0M488.80 138.6v-17.6M499.38 138.6v-3.0M509.95 138.6v-5.0M520.52 138.6v-3.0M531.10 138.6v-7.0M541.67 138.6v-3.0M552.25 138.6v-5.0M562.82 138.6v-3.0M573.40 138.6v-17.6M583.97 138.6v-3.0M594.55 138.6v-5.0M605.12 138.6v-3.0M615.70 138.6v-7.0M626.27 138.6v-3.0M636.85 138.6v-5.0M647.42 138.6v-3.0M658.00 138.6v-17.6M668.57 138.6v-3.0M679.15 138.6v-5.0M689.72 138.6v-3.0M700.30 138.6v-7.0M710.87 138.6v-3.0M721.45 138.6v-5.0M732.02 138.6v-3.0M742.60 138.6v-17.6M753.17 138.6v-3.0M763.75 138.6v-5.0M774.32 138.6v-3.0M784.90 138.6v-7.0M795.47 138.6v-3.0M806.05 138.6v-5.0M816.62 138.6v-3.0M827.20 138.6v-17.6M837.77 138.6v-3.0M848.35 138.6v-5.0M858.92 138.6v-3.0M869.50 138.6v-7.0M880.07 138.6v-3.0M890.65 138.6v-5.0M901.22 138.6v-3.0M911.80 138.6v-17.6M922.37 138.6v-3.0M932.95 138.6v-5.0M943.52 138.6v-3.0M954.10 138.6v-7.0M964.67 138.6v-3.0M975.25 138.6v-5.0M985.82 138.6v-3.0M996.40 138.6v-17.6M1006.97 138.6v-3.0M1017.55 138.6v-5.0M1028.12 138.6v-3.0M1038.70 138.6v-7.0M1049.27 138.6v-3.0M1059.85 138.6v-5.0M1070.42 138.6v-3.0M1081.00 138.6v-17.6M1091.57 138.6v-3.0M1102.15 138.6v-5.0M1112.72 138.6v-3.0M1123.30 138.6v-7.0M1133.87 138.6v-3.0M1144.45 138.6v-5.0M1155.02 138.6v-3.0M1165.60 138.6v-17.6M1176.17 138.6v-3.0M1186.75 138.6v-5.0M1197.32 138.6v-3.0M1207.90 138.6v-7.0M1218.47 138.6v-3.0M1229.05 138.6v-5.0M1239.62 138.6v-3.0M1250.20 138.6v-17.6" stroke="#dcdcdc" stroke-width="1" fill="none"/>
<path d="M71.5 139.10h-17.5M71.5 149.67h-3.0M71.5 160.25h-5.0M71.5 170.82h-3.0M71.5 181.40h-7.0M71.5 191.97h-3.0M71.5 202.55h-5.0M71.5 213.12h-3.0M71.5 223.70h-17.5M71.5 234.27h-3.0M71.5 244.85h-5.0M71.5 255.42h-3.0M71.5 266.00h-7.0M71.5 276.57h-3.0M71.5 287.15h-5.0M71.5 297.73h-3.0M71.5 308.30h-17.5M71.5 318.88h-3.0M71.5 329.45h-5.0M71.5 340.02h-3.0M71.5 350.60h-7.0M71.5 361.17h-3.0M71.5 371.75h-5.0M71.5 382.32h-3.0M71.5 392.90h-17.5M71.5 403.48h-3.0M71.5 414.05h-5.0M71.5 424.62h-3.0M71.5 435.20h-7.0M71.5 445.77h-3.0M71.5 456.35h-5.0M71.5 466.92h-3.0M71.5 477.50h-17.5M71.5 488.07h-3.0M71.5 498.65h-5.0M71.5 509.23h-3.0M71.5 519.80h-7.0M71.5 530.38h-3.0M71.5 540.95h-5.0M71.5 551.52h-3.0M71.5 562.10h-17.5M71.5 572.67h-3.0M71.5 583.25h-5.0M71.5 593.82h-3.0M71.5 604.40h-7.0M71.5 614.97h-3.0M71.5 625.55h-5.0M71.5 636.12h-3.0M71.5 646.70h-17.5M71.5 657.27h-3.0M71.5 667.85h-5.0M71.5 678.42h-3.0M71.5 689.00h-7.0M71.5 699.57h-3.0M71.5 710.15h-5.0M71.5 720.73h-3.0M71.5 731.30h-17.5M71.5 741.88h-3.0M71.5 752.45h-5.0M71.5 763.02h-3.0M71.5 773.60h-7.0M71.5 784.17h-3.0M71.5 794.75h-5.0M71.5 805.32h-3.0M71.5 815.90h-17.5M71.5 826.48h-3.0" stroke="#dcdcdc" stroke-width="1" fill="none"/>
<path d="M54 139.1H1250M71.5 138.6V830" stroke="#e0e0e0" stroke-width="1" fill="none"/>
<path d="M54 121.5H1250" stroke="#c8c8c8" stroke-width="1.4" fill="none"/>
<g font-size="9.5" fill="#686868">
<text x="71.5" y="131.5">1</text>
<text x="153.1" y="131.5">2</text>
<text x="237.7" y="131.5">4</text>
<text x="322.3" y="131.5">6</text>
<text x="406.9" y="131.5">8</text>
<text x="491.5" y="131.5">10</text>
<text x="576.1" y="131.5">12</text>
<text x="660.7" y="131.5">14</text>
<text x="745.3" y="131.5">16</text>
<text x="829.9" y="131.5">18</text>
<text x="914.5" y="131.5">20</text>
<text x="999.1" y="131.5">22</text>
<text x="1083.7" y="131.5">24</text>
<text x="1168.3" y="131.5">26</text>
<text transform="translate(63 141.1) rotate(-90)" text-anchor="end">0</text>
<text transform="translate(63 225.7) rotate(-90)" text-anchor="end">2</text>
<text transform="translate(63 310.3) rotate(-90)" text-anchor="end">4</text>
<text transform="translate(63 394.9) rotate(-90)" text-anchor="end">6</text>
<text transform="translate(63 479.5) rotate(-90)" text-anchor="end">8</text>
<text transform="translate(63 564.1) rotate(-90)" text-anchor="end">10</text>
<text transform="translate(63 648.7) rotate(-90)" text-anchor="end">12</text>
<text transform="translate(63 733.3) rotate(-90)" text-anchor="end">14</text>
<text transform="translate(63 817.9) rotate(-90)" text-anchor="end">16</text>
</g></g>
<g id="sel">
<path d="M768.5 176.5H1128.5V829M768.5 176.5V829" stroke="#8e8e8e" stroke-width="1" fill="none"/>
<rect x="764.5" y="172.5" width="8" height="8" fill="#fff" stroke="#7a7a7a" stroke-width="1"/>
<rect x="1124.5" y="172.5" width="8" height="8" fill="#fff" stroke="#7a7a7a" stroke-width="1"/>
<path d="M928 515H968M948.300 496V535" stroke="#7a7a7a" stroke-opacity=".38" stroke-width="1" fill="none"/>
<rect x="909" y="147.5" width="78.5" height="16.5" rx="2.5" fill="#1c1c1c"/>
<text x="948.2" y="159.3" font-size="9" font-weight="bold" fill="#fff" text-anchor="middle" word-spacing="1">8.5 in x 16 in</text>
<path d="M975.300 530.800V554.600L980.600 549.800L984.400 558.200L988 556.600L984.300 548.400H991.800Z" fill="#000" stroke="#fff" stroke-width="1.300" stroke-linejoin="round"/>
</g>
</svg>
</div>
<div id="zoomctl" class="abs" style="left:100px;top:799px;width:63px;height:23px;border-radius:6px;background:rgba(238,238,238,.85)"></div>
<span class="t" style="left:106px;top:803px;font-size:15.500px;color:#b4b4b4">75%</span>
<svg class="abs" style="left:140px;top:799px" width="24" height="23" viewBox="0 0 24 23" fill="none" stroke="#bdbdbd" stroke-width="1.300"><circle cx="11" cy="10.800" r="7.300"/><path d="M11 7v7.600M7.200 10.800h7.600"/></svg>
<svg id="logo" class="abs" style="left:0;top:740px" width="125" height="100" viewBox="0 740 125 100">
<ellipse cx="61.200" cy="790" rx="51" ry="39.800" fill="#c8391f"/>
<g fill="#fff" font-family="'Liberation Serif',serif" font-style="italic">
<text x="22.500" y="789.500" font-size="31" stroke="#fff" stroke-width=".45" textLength="55" lengthAdjust="spacingAndGlyphs">Craft</text>
<text x="31" y="814.500" font-size="29" stroke="#fff" stroke-width=".45" textLength="62" lengthAdjust="spacingAndGlyphs">Sarah</text>
<text x="81.500" y="783.200" font-size="6.800" font-weight="bold" font-style="normal" textLength="20.500" lengthAdjust="spacingAndGlyphs">WITH</text>
</g>
<g fill="none" stroke="#fff" stroke-width="1.100" stroke-linecap="round">
<path d="M82.500 787c3-2.200 6-1.800 9.500-.600s7.500 1.400 10.500-1.600"/>
<path d="M66 797.500c3-3.500 8-5 13-4.500 6 .600 12 1.500 17-1 3-2 2-5.500-1.500-5"/>
<path d="M40 801c-5 1-9 5-9.500 10-.400 4 2 7 5.500 7.500 2.500.300 4-1.500 3-3.500"/>
<path d="M27 770.500c-3.500 1-5 4-4 7 1 2.500 4 2.500 5 .500"/>
</g>
</svg>
<div id="vscroll">
<div class="abs" style="left:2px;top:14px;width:11.500px;height:45px;background:#c1c1c1"></div>
<svg class="abs" style="left:0;top:0" width="16" height="719" viewBox="1250 121 16 719"><path d="M1254.300 130.200l3.400-3.600 3.400 3.600z" fill="#a3a3a3"/><path d="M1254.300 819.800l3.400 3.600 3.400-3.600z" fill="#505050"/><rect x="1250.500" y="829.500" width="13.500" height="11" fill="#dadada"/></svg>
</div>
<div id="hscroll">
<div class="abs" style="left:14px;top:1.500px;width:130px;height:9px;background:#c1c1c1"></div>
<svg class="abs" style="left:0;top:0" width="1212" height="12" viewBox="54 828 1212 12"><path d="M62.400 831.400l-3.600 3.300 3.600 3.300z" fill="#505050"/><path d="M1241.600 831.400l3.600 3.300-3.600 3.300z" fill="#505050"/></svg>
</div>
<div id="panel">
<span class="t" style="left:13px;top:12px;font-size:11px;font-weight:bold;color:#0d8a5f">Layers</span>
<span class="t" style="left:72px;top:12px;font-size:11.500px;color:#555">Color Sync</span>
<div class="abs" style="left:0;top:37px;width:234px;height:1px;background:#e6e6e6"></div>
<div class="abs" style="left:1px;top:35px;width:60px;height:2.500px;background:#0d8a5f;border-radius:1px"></div>
<div class="abs" style="left:0;top:75px;width:222px;height:1px;background:#e9e9e9"></div>
<div class="abs" style="left:4px;top:78.500px;width:215.500px;height:43px;background:#b8ecdb;border-radius:3px"></div>
<div class="abs" style="left:222px;top:75px;width:12px;height:607px;background:#f3f3f3"></div>
<div class="abs" style="left:0;top:682px;width:234px;height:40px;background:#f3f3f3"></div>
<div class="abs" style="left:8.500px;top:688px;width:41px;height:28px;background:#fff;border:1px solid #a9a9a9;border-radius:2px"></div>
<span class="t" style="left:58px;top:698.500px;font-size:7.500px;color:#444">Blank Canvas</span>
<span class="t" style="left:54px;top:93.500px;font-size:11.500px;font-weight:bold;color:#1d2b28">Attach</span>
<span class="t" style="left:54px;top:139.500px;font-size:11.500px;color:#666">Group</span>
<span class="t" style="left:79px;top:176px;font-size:11px;letter-spacing:.25px;color:#555">Decorative Butterfly</span>
<span class="t" style="left:79px;top:191.500px;font-size:11px;color:#8c8c8c">Basic Cut</span>
<span class="t" style="left:79px;top:220px;font-size:11px;letter-spacing:.25px;color:#555">Decorative Butterfly</span>
<span class="t" style="left:79px;top:235.500px;font-size:11px;color:#8c8c8c">Basic Cut</span>
<span class="t" style="left:79px;top:264.500px;font-size:11px;color:#555">Weld Result</span>
<span class="t" style="left:79px;top:280px;font-size:11px;color:#8c8c8c">Basic Cut</span>
<span class="t" style="left:10.500px;top:746px;font-size:7.500px;color:#c9c9c9;width:22px;text-align:center">Slice</span>
<span class="t" style="left:43px;top:746px;font-size:7.500px;color:#c9c9c9;width:34px;text-align:center">Combine</span>
<span class="t" style="left:88px;top:746px;font-size:7.500px;color:#333;width:28px;text-align:center">Detach</span>
<span class="t" style="left:127px;top:746px;font-size:7.500px;color:#c9c9c9;width:28px;text-align:center">Flatten</span>
<span class="t" style="left:165px;top:746px;font-size:7.500px;color:#c9c9c9;width:32px;text-align:center">Contour</span>
<svg class="abs" style="left:0;top:0" width="234" height="757" viewBox="1266 83 234 757" fill="none" stroke="#2b2b2b" stroke-width="1.200" stroke-linecap="round" stroke-linejoin="round">
<!-- top icons -->
<g stroke="#e3e3e3"><path d="M1283 135v-2.500h2.500M1295 135v-2.500h-2.500M1283 142v2.500h2.500M1295 142v2.500h-2.500"/><circle cx="1287.800" cy="137.400" r="2.400"/><rect x="1288" y="138" width="4.600" height="4.600" rx="1"/></g>
<path d="M1316.400 142.200h-2v-9h9v2"/><rect x="1316.400" y="135.200" width="10" height="10" rx="1.200"/><path d="M1321.400 137.600v5.200M1318.800 140.200h5.200"/>
<path d="M1345.400 135h13M1349.400 135v-1.600h5v1.600M1346.800 135l.8 10h8.600l.8-10M1350.200 137.600v5M1353.600 137.600v5" stroke-width="1.300"/>
<!-- attach row -->
<path d="M1281.400 178l3.400 3.400-3.400 3.400" stroke-width="1.400"/>
<path d="M1309.500 180.400H1302.200a2.100 2.100 0 0 0 0 4.200H1309a3.500 3.500 0 0 0 0-7H1301.800a4.800 4.800 0 0 0 0 9.600H1310" stroke-width="1.200"/>
<!-- group row -->
<path d="M1279.400 226.200l3.600 3.600 3.600-3.600" stroke-width="1.400"/>
<path d="M1298 224.400v-3h3M1312 224.400v-3h-3M1298 231.600v3h3M1312 231.600v3h-3" stroke-width="1.300"/><rect x="1300.800" y="224" width="5.600" height="5.600" rx="1.400" stroke-width="1.200"/><rect x="1303.800" y="227" width="5.600" height="5.600" rx="1.200" stroke-width="1.200" fill="#fff"/>
<!-- thumbs -->
<g id="th1" transform="translate(1329.800 271.400)">
<path d="M0-1.500C-2-5-5-7.500-7.500-8c0 3 1 5.500 3 7.500C-7 1-8.500 4.500-8.500 7.500c3 .5 6-1.500 8.500-5.500 2.500 4 5.500 6 8.500 5.500C8.500 4.500 7 1 4.500-.5c2-2 3-4.500 3-7.500C5-7.500 2-5 0-1.500z" fill="#1e0f16" stroke="#1e0f16" stroke-width=".8"/>
<path d="M-5-5.500c1 2 2.500 3.500 4 4.500M5-5.500c-1 2-2.500 3.500-4 4.500M-6 5c1.500-1 3-2.500 4.500-4.500M6 5c-1.500-1-3-2.500-4.500-4.500" stroke="#e8407a" stroke-width="1.100"/><circle cx="0" cy="-.5" r="1.300" fill="#e8407a" stroke="none"/>
</g>
<g id="th2" transform="translate(1329.800 315.600)">
<path d="M0-1.500C-2-5-5-7.500-7.500-8c0 3 1 5.500 3 7.500C-7 1-8.500 4.500-8.500 7.500c3 .5 6-1.500 8.500-5.500 2.500 4 5.500 6 8.500 5.500C8.500 4.500 7 1 4.500-.5c2-2 3-4.500 3-7.500C5-7.500 2-5 0-1.500z" fill="#fff" stroke="#9a9a9a" stroke-width=".8"/>
<path d="M-2.500 3.500l2.500-2.500 2.500 2.500" stroke="#333" stroke-width="1.100"/><path d="M-1-3v2M1-3v2" stroke="#666" stroke-width=".8"/>
</g>
<g id="th3" transform="translate(1329.800 360.200)">
<path d="M-7.500-8.500h15c0 1-.8 2-1.800 2.600.5 2 .4 3.800-.4 5.200 1.800 2 3 5 3.400 8-2.600.6-5.600-1.400-8.700-4.800-3.100 3.400-6.100 5.400-8.700 4.800.4-3 1.600-6 3.400-8-.8-1.400-.9-3.200-.4-5.200-1-.6-1.800-1.600-1.800-2.600z" fill="#f8b9d7" stroke="#a58a98" stroke-width=".7"/>
</g>
<!-- panel scrollbar arrows -->
<path d="M1491.400 168.400l3.300-3.600 3.300 3.600z" fill="#9a9a9a" stroke="none"/>
<path d="M1491.400 756.800l3.300 3.600 3.300-3.600z" fill="#555" stroke="none"/>
<!-- bottom actions -->
<g stroke="#cdcdcd">
<rect x="1283.400" y="810.400" width="7.400" height="7.400" rx="2"/><rect x="1287.400" y="814.400" width="7.400" height="7.400" rx="1"/><path d="M1288.600 817.600l1.800-2"/>
<rect x="1317" y="810" width="7.400" height="7.400" rx=".8"/><circle cx="1325.200" cy="818" r="4.200"/><path d="M1335.200 815.400l2 2.400 2-2.400z" fill="#cdcdcd" stroke="none"/>
<path d="M1402 814.600l5.600 3.200 5.600-3.200M1402 818.400l5.600 3.200 5.600-3.200M1407.600 808.600v5M1405.600 811.800l2 2 2-2"/>
<circle cx="1447.200" cy="816.400" r="7" stroke-dasharray="3 2.400" stroke-width="1.300"/>
</g>
<path d="M1375.400 816.800h-8.400a2 2 0 0 0 0 4h6a3.800 3.800 0 0 0 2.400-7M1372 812.600h-5.400a5.600 5.600 0 0 0-1 11" stroke-width="1.200" transform="translate(0 -2.400)"/>
<path d="M1363.200 809.400l12.600 12" stroke-width="1.300"/>
</svg>
</div>
</body>
</html>
